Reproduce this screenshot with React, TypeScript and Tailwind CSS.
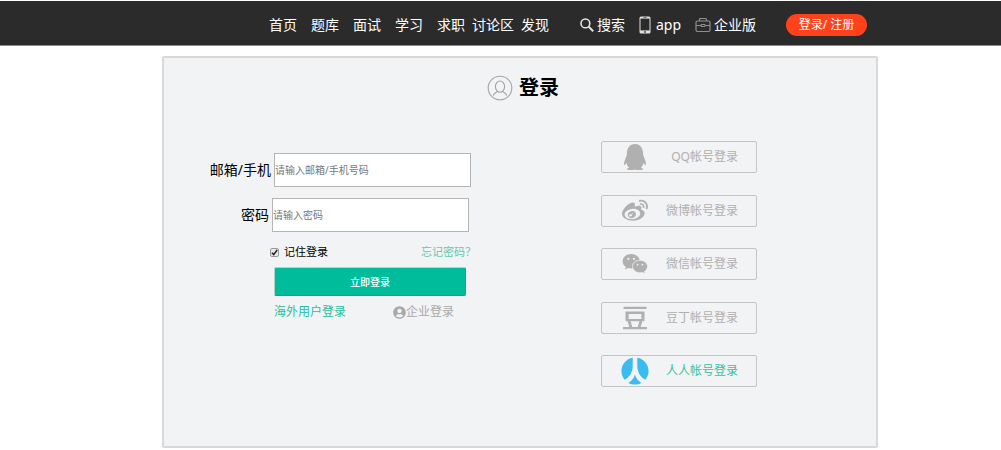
import type { ReactNode } from "react";
import { FaQq, FaRenren, FaUserCircle, FaWeibo } from "react-icons/fa";
import { SiDouban } from "react-icons/si";

const navItems = ["首页", "题库", "面试", "学习", "求职", "讨论区", "发现"];

interface SocialItem {
    name: string;
    icon: ReactNode;
    active?: boolean;
}

const socials: SocialItem[] = [
    { name: "QQ帐号登录", icon: <FaQq className="h-[26px] w-[26px]" /> },
    { name: "微博帐号登录", icon: <FaWeibo className="h-[26px] w-[26px]" /> },
    { name: "微信帐号登录", icon: <WechatIcon /> },
    { name: "豆丁帐号登录", icon: <SiDouban className="h-6 w-6" /> },
    { name: "人人帐号登录", icon: <FaRenren className="h-7 w-7 text-[#3bbcf0]" />, active: true },
];

function WechatIcon() {
    return (
        <svg viewBox="0 0 26 22" className="h-[22px] w-[26px]" fill="currentColor">
            <path d="M9.2 1C4.3 1 .6 4.200.6 8.300c0 2.300 1.200 4.200 3.200 5.600L3 16.600l3.100-1.600c1 .3 2 .5 3.100.5 4.900 0 8.700-3.200 8.700-7.200S14.100 1 9.200 1Z" />
            <path
                d="M18 7.200c-4.200 0-7.500 2.800-7.500 6.300s3.300 6.300 7.500 6.300c.9 0 1.800-.2 2.600-.4l2.600 1.500-.7-2.400c1.800-1.200 3-2.900 3-5 0-3.500-3.300-6.300-7.500-6.300Z"
                stroke="#f2f3f5"
                strokeWidth="0.8"
            />
            <g fill="#f2f3f5">
                <circle cx="6.300" cy="5.800" r="1.100" />
                <circle cx="12" cy="5.800" r="1.100" />
                <circle cx="15.600" cy="11.600" r="0.900" />
                <circle cx="20.400" cy="11.600" r="0.900" />
            </g>
        </svg>
    );
}

function SearchIcon() {
    return (
        <svg viewBox="0 0 14 14" className="h-[14px] w-[14px]" fill="none" stroke="#e6e6e6" strokeWidth="1.6">
            <circle cx="5.4" cy="5.4" r="4.4" />
            <path d="M8.6 8.6 13.2 13.2" strokeWidth="2" />
        </svg>
    );
}

function PhoneIcon() {
    return (
        <svg viewBox="0 0 12 18" className="h-[18px] w-3">
            <rect x="0.5" y="0.5" width="11" height="17" rx="1.5" fill="#e0e0e0" />
            <rect x="1.5" y="2.6" width="9" height="11.8" fill="#2b2b2b" />
            <path d="M4.5 1.5h3" stroke="#555" strokeWidth="0.8" />
            <circle cx="6" cy="16" r="0.9" fill="#444" />
        </svg>
    );
}

function BriefcaseIcon() {
    return (
        <svg viewBox="0 0 16 16" className="h-4 w-4" fill="none" stroke="#8f8f8f" strokeWidth="1.2">
            <rect x="1" y="4" width="14" height="10.5" rx="1.5" />
            <path d="M4.5 4V2.5a1 1 0 0 1 1-1h5a1 1 0 0 1 1 1V4M1 8.5h5M10 8.5h5" />
            <rect x="6" y="7.5" width="4" height="2" rx="0.8" />
        </svg>
    );
}

function UserOutlineIcon() {
    return (
        <svg viewBox="0 0 26 26" className="h-[26px] w-[26px]" fill="none" stroke="#a3a3a3" strokeWidth="1.1">
            <circle cx="13" cy="13" r="11.8" />
            <ellipse cx="13" cy="11.6" rx="4.6" ry="5.6" />
            <path d="M10.4 16.2c-.4 1.4-3.6 1.4-4.1 4.4M15.6 16.2c.4 1.4 3.6 1.4 4.1 4.4" />
        </svg>
    );
}

function Header() {
    return (
        <header className="mt-px flex h-[45px] items-center border-b border-[#8a8a8a] bg-[#2b2b2b] pt-1 pl-[262px] text-sm text-white">
            <nav className="flex shrink-0">
                {navItems.map((item) => (
                    <a key={item} href="#" className="w-[42px] text-center whitespace-nowrap">
                        {item}
                    </a>
                ))}
            </nav>
            <div className="ml-6 flex shrink-0 items-center gap-[14px]">
                <a href="#" className="flex items-center gap-[3px]">
                    <SearchIcon />
                    搜索
                </a>
                <a href="#" className="flex items-center gap-[5px]">
                    <PhoneIcon />
                    app
                </a>
                <a href="#" className="flex items-center gap-[3px]">
                    <BriefcaseIcon />
                    企业版
                </a>
            </div>
            <button className="ml-[30px] h-[22px] w-[81px] shrink-0 rounded-full bg-[#ff421c] text-xs leading-none">
                登录/ 注册
            </button>
        </header>
    );
}

function LoginForm() {
    return (
        <form className="w-[312px] pt-3" onSubmit={(e) => e.preventDefault()}>
            <div className="flex items-center">
                <label htmlFor="account" className="w-[107px] text-right text-sm whitespace-nowrap">
                    邮箱/手机
                </label>
                <input
                    id="account"
                    type="text"
                    placeholder="请输入邮箱/手机号码"
                    className="ml-[3px] h-[34px] w-[197px] border border-[#b5b5b5] bg-white text-[10px] placeholder:text-[#777]"
                />
            </div>
            <div className="mt-[11px] flex items-center">
                <label htmlFor="password" className="w-[105px] text-right text-sm">
                    密码
                </label>
                <input
                    id="password"
                    type="password"
                    placeholder="请输入密码"
                    className="ml-[3px] h-[34px] w-[197px] border border-[#b5b5b5] bg-white text-[10px] placeholder:text-[#777]"
                />
            </div>
            <div className="mt-3 ml-[106px] flex items-center justify-between text-[11px] leading-4">
                <label className="relative flex items-center gap-[5px]">
                    <input type="checkbox" defaultChecked className="peer sr-only" />
                    <span className="flex h-[9px] w-[9px] items-center justify-center rounded-xs border border-[#999] bg-[#e8e8e8] text-transparent peer-checked:text-[#222]">
                        <svg viewBox="0 0 8 8" className="h-[7px] w-[7px]" fill="none" stroke="currentColor" strokeWidth="1.8">
                            <path d="M1 4.2 3.1 6.4 7 1.2" />
                        </svg>
                    </span>
                    记住登录
                </label>
                <a href="#" className="text-[#62c9ae]">
                    忘记密码？
                </a>
            </div>
            <button
                type="submit"
                className="mt-[7px] ml-[110px] block h-[29px] w-[192px] rounded-xs border border-t-[#b9cfc9] border-r-[#777] border-b-[#777] border-l-[#b9cfc9] bg-[#00bc9b] pt-px text-[10px] font-medium text-white"
            >
                立即登录
            </button>
            <div className="mt-2 ml-[110px] flex w-[180px] items-center justify-between text-xs">
                <a href="#" className="text-[#26bf9f]">
                    海外用户登录
                </a>
                <a href="#" className="flex items-center text-[#a9a9a9]">
                    <FaUserCircle className="h-[13px] w-[13px]" />
                    企业登录
                </a>
            </div>
        </form>
    );
}

function SocialLogin() {
    return (
        <div className="flex h-[246px] w-[156px] flex-col justify-between">
            {socials.map((item) => (
                <button
                    key={item.name}
                    className="flex h-8 items-center justify-between rounded-xs border border-[#c4c4c4] pr-[18px] pl-[18px] text-xs text-[#b0b0b0]"
                >
                    <span className="flex w-[30px] justify-center">{item.icon}</span>
                    <span className={item.active ? "text-[#36c2a3]" : ""}>{item.name}</span>
                </button>
            ))}
        </div>
    );
}

export default function App() {
    return (
        <div className="bg-white font-['Noto_Sans','Noto_Sans_CJK_SC',sans-serif] text-black">
            <Header />
            <main className="pt-[10px] pr-[123px] pb-[2px] pl-[162px]">
                <section className="rounded-xs border-2 border-[#d8d8d9] bg-[#f2f3f5] pb-[59px]">
                    <h1 className="flex items-center justify-center gap-[6px] pt-[17px] pl-[6px] text-xl leading-[26px] font-bold">
                        <UserOutlineIcon />
                        登录
                    </h1>
                    <div className="mt-10 flex items-start justify-between pr-[119px]">
                        <LoginForm />
                        <SocialLogin />
                    </div>
                </section>
            </main>
        </div>
    );
}
